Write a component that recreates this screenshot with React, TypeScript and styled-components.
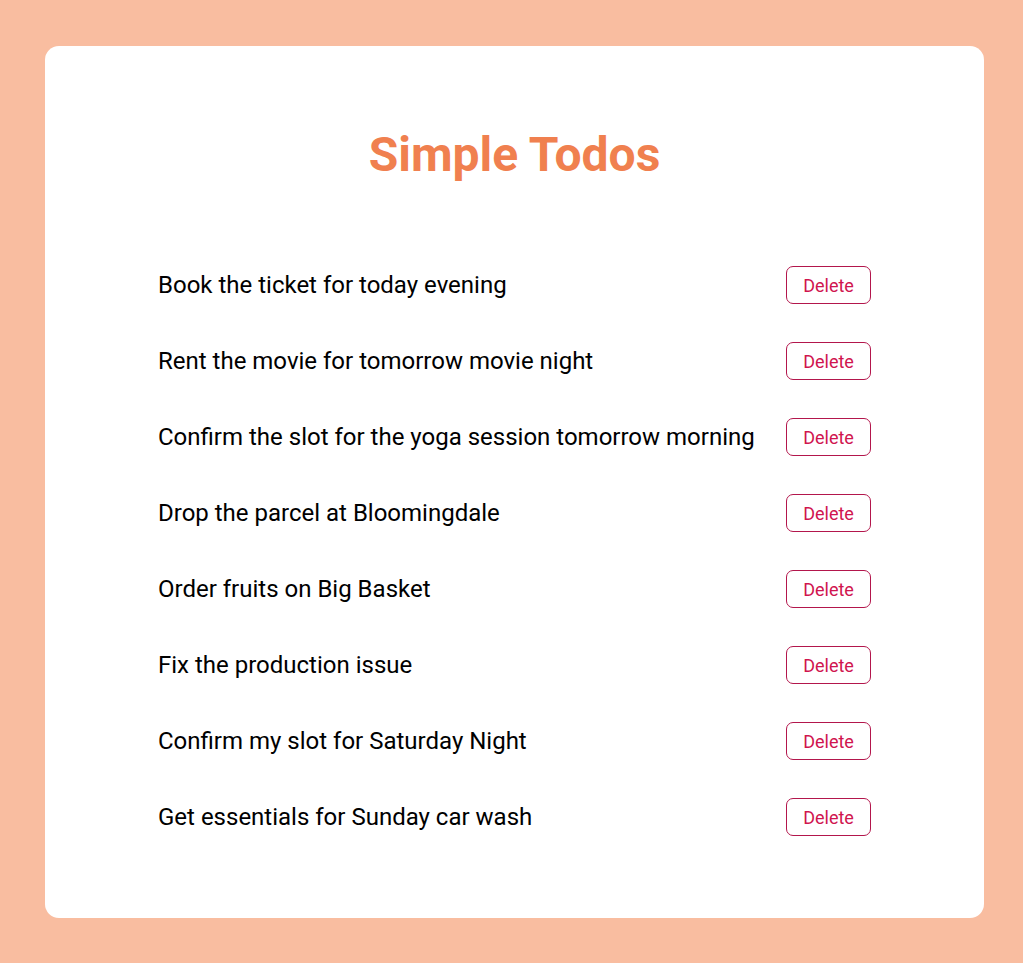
import styled, { createGlobalStyle } from "styled-components";

const GlobalStyle = createGlobalStyle`
  body {
    margin: 0;
    background-color: #f9bda0;
    font-family: "Roboto", "Liberation Sans", sans-serif;
  }
`;

const Page = styled.div`
  min-height: 963px;
  padding: 46px 39px 45px 45px;
  box-sizing: border-box;
`;

const Card = styled.div`
  background-color: #ffffff;
  border-radius: 14px;
  width: 939px;
  height: 872px;
  box-sizing: border-box;
  padding: 76px 113px 0 113px;
`;

const Title = styled.h1`
  margin: 0;
  text-align: center;
  color: #f0804f;
  font-size: 48px;
  font-weight: 700;
  line-height: 66px;
`;

const TodoList = styled.ul`
  list-style: none;
  margin: 78px 0 0 0;
  padding: 0;
  display: flex;
  flex-direction: column;
  gap: 38px;
`;

const TodoRow = styled.li`
  display: flex;
  align-items: center;
  justify-content: space-between;
  height: 38px;
`;

const TodoText = styled.p`
  margin: 0;
  color: #000000;
  font-size: 24px;
`;

const DeleteButton = styled.button`
  width: 85px;
  height: 38px;
  background-color: transparent;
  border: 1px solid #b3164c;
  border-radius: 7px;
  color: #d0154f;
  font-family: "Roboto", "Liberation Sans", sans-serif;
  font-size: 18px;
  cursor: pointer;
`;

const todos = [
  { id: 1, title: "Book the ticket for today evening" },
  { id: 2, title: "Rent the movie for tomorrow movie night" },
  { id: 3, title: "Confirm the slot for the yoga session tomorrow morning" },
  { id: 4, title: "Drop the parcel at Bloomingdale" },
  { id: 5, title: "Order fruits on Big Basket" },
  { id: 6, title: "Fix the production issue" },
  { id: 7, title: "Confirm my slot for Saturday Night" },
  { id: 8, title: "Get essentials for Sunday car wash" },
];

const App = () => (
  <>
    <GlobalStyle />
    <Page>
      <Card>
        <Title>Simple Todos</Title>
        <TodoList>
          {todos.map(todo => (
            <TodoRow key={todo.id}>
              <TodoText>{todo.title}</TodoText>
              <DeleteButton type="button">Delete</DeleteButton>
            </TodoRow>
          ))}
        </TodoList>
      </Card>
    </Page>
  </>
);

export default App;
